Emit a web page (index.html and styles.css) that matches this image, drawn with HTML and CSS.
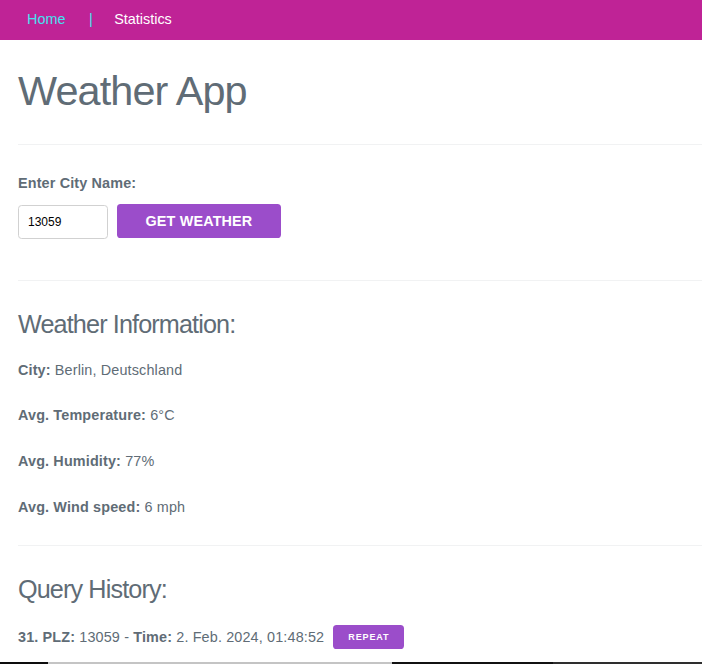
FILE: index.html
```html
<!DOCTYPE html>
<html lang="en">
<head>
<meta charset="utf-8">
<title>Weather App</title>
<link rel="stylesheet" href="styles.css">
</head>
<body>
<nav class="topnav">
  <a class="nav-link nav-active" href="#">Home</a>
  <span class="nav-sep">|</span>
  <a class="nav-link" href="#">Statistics</a>
</nav>
<main class="page">
  <h1 class="title">Weather App</h1>
  <hr class="rule rule-first">
  <section class="search">
    <label class="search-label" for="city">Enter City Name:</label>
    <div class="search-row">
      <input class="search-input" id="city" type="text" value="13059">
      <button class="btn btn-main" type="button">Get Weather</button>
    </div>
  </section>
  <hr class="rule rule-second">
  <section class="info">
    <h3 class="section-title">Weather Information:</h3>
    <p class="info-line"><strong>City:</strong> Berlin, Deutschland</p>
    <p class="info-line"><strong>Avg. Temperature:</strong> 6°C</p>
    <p class="info-line"><strong>Avg. Humidity:</strong> 77%</p>
    <p class="info-line info-last"><strong>Avg. Wind speed:</strong> 6 mph</p>
  </section>
  <hr class="rule rule-third">
  <section class="history">
    <h3 class="section-title section-title-history">Query History:</h3>
    <div class="history-row">
      <span class="history-text"><strong>31. PLZ:</strong> 13059 - <strong>Time:</strong> 2. Feb. 2024, 01:48:52</span>
      <button class="btn btn-small" type="button">Repeat</button>
    </div>
  </section>
</main>
<div class="bottom-strip">
  <span class="strip-a"></span>
  <span class="strip-b"></span>
  <span class="strip-c"></span>
  <span class="strip-d"></span>
</div>
</body>
</html>
```
FILE: styles.css
```css
* { box-sizing: border-box; }

html, body {
  margin: 0;
  padding: 0;
  background: #ffffff;
}

body {
  font-family: "Liberation Sans", Arial, Helvetica, sans-serif;
  font-size: 14.4px;
  line-height: 23px;
  letter-spacing: 0.144px;
  color: #606c76;
  overflow: hidden;
}

/* nav */
.topnav {
  height: 40px;
  background: #bf2396;
  display: flex;
  align-items: center;
  padding: 0 0 2px 27px;
  font-size: 14.4px;
  line-height: 17px;
  letter-spacing: 0;
}
.nav-link {
  color: #ffffff;
  text-decoration: none;
}
.nav-active { color: #45e1ef; }
.nav-sep {
  color: #45e1ef;
  margin: 0 21.5px 0 23.6px;
}

/* page */
.page {
  padding-left: 18px;
}

.title {
  margin: 26.5px 0 0;
  font-size: 41.4px;
  line-height: 49.7px;
  font-weight: 400;
  letter-spacing: -0.9px;
  color: #606c76;
}

.rule {
  border: 0;
  border-top: 1px solid #f1f2f3;
  height: 0;
  margin: 0;
}
.rule-first { margin-top: 27.8px; }
.rule-second { margin-top: 41px; }
.rule-third { margin-top: 26px; }

/* search */
.search {
  padding-top: 26.8px;
}
.search-label {
  display: block;
  font-weight: 700;
  line-height: 23px;
  margin-bottom: 9.2px;
}
.search-row {
  display: flex;
  align-items: flex-start;
  gap: 9.5px;
}
.search-input {
  width: 89.5px;
  height: 34px;
  margin: 1px 0 0;
  border: 1px solid #d1d1d1;
  border-radius: 3.6px;
  padding: 0 9px;
  font-family: "Liberation Sans", Arial, sans-serif;
  font-size: 12px;
  color: #000000;
  background: #ffffff;
  outline: none;
}

.btn {
  border: 0;
  margin: 0;
  background: #9b4dca;
  color: #ffffff;
  font-family: "Liberation Sans", Arial, sans-serif;
  font-weight: 700;
  text-transform: uppercase;
  border-radius: 3.6px;
  cursor: pointer;
  white-space: nowrap;
}
.btn-main {
  height: 34px;
  padding: 0 28.5px;
  font-size: 14.4px;
  line-height: 34px;
  letter-spacing: 0.15px;
}
.btn-small {
  height: 24.5px;
  padding: 0 14.3px 0 15px;
  font-size: 9px;
  line-height: 24.5px;
  letter-spacing: 0.9px;
}

/* info */
.info {
  padding-top: 27px;
}
.section-title {
  margin: 0 0 18px;
  font-size: 25.2px;
  line-height: 32.8px;
  font-weight: 400;
  letter-spacing: -0.87px;
  color: #606c76;
}
.section-title-history { margin-bottom: 19px; }
.info-line {
  margin: 0 0 22.7px;
  line-height: 23px;
}
.info-line.info-last { margin-bottom: 0; }

/* history */
.history {
  padding-top: 27px;
}
.history-row {
  display: flex;
  align-items: center;
  gap: 9px;
  height: 24.5px;
}
.history-text {
  line-height: 23px;
  padding-top: 0.5px;
}

/* bottom strip */
.bottom-strip {
  position: fixed;
  left: 0;
  right: 0;
  bottom: 0;
  height: 2px;
  display: flex;
}
.strip-a { width: 48px; background: #0d0d0d; }
.strip-b { width: 344px; background: #c4c4c4; }
.strip-c { width: 161px; background: #111111; }
.strip-d { flex: 1; background: #2e2e2e; }
```
